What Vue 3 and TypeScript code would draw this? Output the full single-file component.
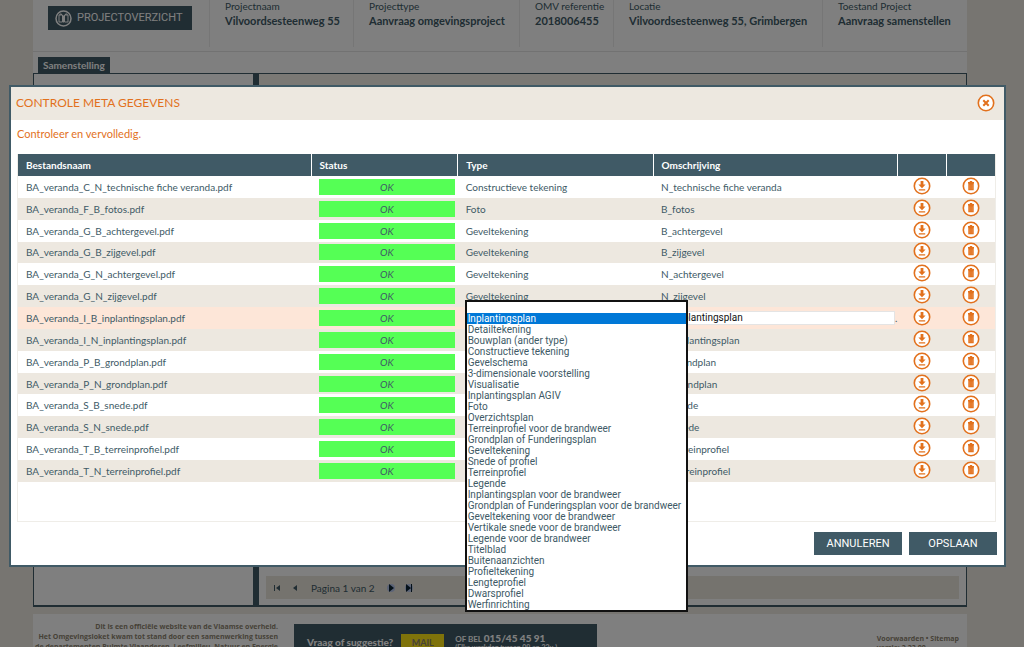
<script setup lang="ts">
import { ref } from 'vue'

interface Doc {
  file: string
  type: string
  description: string
  editing?: boolean
}

const facts = [
  { label: 'Projectnaam', value: 'Vilvoordsesteenweg 55' },
  { label: 'Projecttype', value: 'Aanvraag omgevingsproject' },
  { label: 'OMV referentie', value: '2018006455' },
  { label: 'Locatie', value: 'Vilvoordsesteenweg 55, Grimbergen' },
  { label: 'Toestand Project', value: 'Aanvraag samenstellen' },
]

const docs = ref<Doc[]>([
  { file: 'BA_veranda_C_N_technische fiche veranda.pdf', type: 'Constructieve tekening', description: 'N_technische fiche veranda' },
  { file: 'BA_veranda_F_B_fotos.pdf', type: 'Foto', description: 'B_fotos' },
  { file: 'BA_veranda_G_B_achtergevel.pdf', type: 'Geveltekening', description: 'B_achtergevel' },
  { file: 'BA_veranda_G_B_zijgevel.pdf', type: 'Geveltekening', description: 'B_zijgevel' },
  { file: 'BA_veranda_G_N_achtergevel.pdf', type: 'Geveltekening', description: 'N_achtergevel' },
  { file: 'BA_veranda_G_N_zijgevel.pdf', type: 'Geveltekening', description: 'N_zijgevel' },
  { file: 'BA_veranda_I_B_inplantingsplan.pdf', type: 'Inplantingsplan', description: 'B_inplantingsplan', editing: true },
  { file: 'BA_veranda_I_N_inplantingsplan.pdf', type: 'Inplantingsplan', description: 'N_inplantingsplan' },
  { file: 'BA_veranda_P_B_grondplan.pdf', type: 'Grondplan', description: 'B_grondplan' },
  { file: 'BA_veranda_P_N_grondplan.pdf', type: 'Grondplan', description: 'N_grondplan' },
  { file: 'BA_veranda_S_B_snede.pdf', type: 'Snede of profiel', description: 'B_snede' },
  { file: 'BA_veranda_S_N_snede.pdf', type: 'Snede of profiel', description: 'N_snede' },
  { file: 'BA_veranda_T_B_terreinprofiel.pdf', type: 'Terreinprofiel', description: 'B_terreinprofiel' },
  { file: 'BA_veranda_T_N_terreinprofiel.pdf', type: 'Terreinprofiel', description: 'N_terreinprofiel' },
])

const types = [
  '', 'Inplantingsplan', 'Detailtekening', 'Bouwplan (ander type)', 'Constructieve tekening', 'Gevelschema',
  '3-dimensionale voorstelling', 'Visualisatie', 'Inplantingsplan AGIV', 'Foto', 'Overzichtsplan',
  'Terreinprofiel voor de brandweer', 'Grondplan of Funderingsplan', 'Geveltekening', 'Snede of profiel',
  'Terreinprofiel', 'Legende', 'Inplantingsplan voor de brandweer',
  'Grondplan of Funderingsplan voor de brandweer', 'Geveltekening voor de brandweer',
  'Vertikale snede voor de brandweer', 'Legende voor de brandweer', 'Titelblad', 'Buitenaanzichten',
  'Profieltekening', 'Lengteprofiel', 'Dwarsprofiel', 'Werfinrichting',
]
</script>

<template>
  <div class="screen">
    <div class="page">
      <header class="facts">
        <div class="fact">
          <button class="overview" type="button">
            <svg width="17" height="17" viewBox="0 0 17 17" fill="none" stroke="currentColor">
              <circle cx="8.500" cy="8.500" r="7.500" stroke-width="1.500" />
              <path d="M4 5h3.500v7H4zM9.500 5H13v7H9.500zM5 5V4h1.500v1M10.500 5V4H12v1M8.500 5.500v7" />
            </svg>
            PROJECTOVERZICHT
          </button>
        </div>
        <div v-for="fact in facts" :key="fact.label" class="fact">
          <span class="label">{{ fact.label }}</span>
          <strong>{{ fact.value }}</strong>
        </div>
      </header>
      <nav class="tabs"><a href="#samenstelling">Samenstelling</a></nav>
      <main class="panels">
        <section class="tree"></section>
        <section class="files">
          <div class="toolbar"></div>
          <div class="pager">
            <button type="button" aria-label="Eerste pagina">
              <svg width="8" height="8" viewBox="0 0 8 8"><path d="M1 1h1v6H1zM7 1v6L3 4z" fill="currentColor" /></svg>
            </button>
            <button type="button" aria-label="Vorige pagina">
              <svg width="8" height="8" viewBox="0 0 8 8"><path d="M6 1v6L2 4z" fill="currentColor" /></svg>
            </button>
            <span>Pagina 1 van 2</span>
            <button class="on" type="button" aria-label="Volgende pagina">
              <svg width="8" height="8" viewBox="0 0 8 8"><path d="M2 0v8l5-4z" fill="currentColor" /></svg>
            </button>
            <button class="on" type="button" aria-label="Laatste pagina">
              <svg width="8" height="8" viewBox="0 0 8 8"><path d="M1 0v8l5-4zM6 0h1v8H6z" fill="currentColor" /></svg>
            </button>
          </div>
        </section>
      </main>
      <footer class="footer">
        <p class="about">
          Dit is een officiële website van de Vlaamse overheid.<br />
          Het Omgevingsloket kwam tot stand door een samenwerking tussen<br />
          de departementen Ruimte Vlaanderen, Leefmilieu, Natuur en Energie
        </p>
        <div class="contact">
          <strong>Vraag of suggestie?</strong>
          <a class="mail" href="#mail">MAIL</a>
          <p class="phone">OF BEL <b>015/45 45 91</b><br /><small>(Elke werkdag tussen 09 en 22u.)</small></p>
        </div>
        <p class="links"><a href="#voorwaarden">Voorwaarden</a> • <a href="#sitemap">Sitemap</a><br />versie: 2.23.00</p>
      </footer>
    </div>

    <div class="shade">
      <section class="dialog" role="dialog" aria-labelledby="dialog-title">
        <header class="dialog-head">
          <h1 id="dialog-title">CONTROLE META GEGEVENS</h1>
          <button class="icon" type="button" aria-label="Sluiten">
            <svg width="18" height="18" viewBox="0 0 18 18" fill="none" stroke="currentColor">
              <circle cx="9" cy="9" r="7.700" fill="#fff" stroke-width="1.600" />
              <path d="M6.300 6.300l5.400 5.400M11.700 6.300l-5.400 5.400" stroke-width="2" />
            </svg>
          </button>
        </header>
        <p class="hint">Controleer en vervolledig.</p>
        <div class="table-box">
          <table>
            <thead>
              <tr>
                <th class="w-file">Bestandsnaam</th>
                <th class="w-status">Status</th>
                <th class="w-type">Type</th>
                <th class="w-desc">Omschrijving</th>
                <th class="w-icon"></th>
                <th class="w-icon"></th>
              </tr>
            </thead>
            <tbody>
              <tr v-for="doc in docs" :key="doc.file" :class="{ editing: doc.editing }">
                <td>{{ doc.file }}</td>
                <td class="status"><span>OK</span></td>
                <td v-if="doc.editing" class="type-cell">
                  <select v-model="doc.type" :size="types.length" aria-label="Type">
                    <option v-for="type in types" :key="type" :value="type">{{ type }}</option>
                  </select>
                </td>
                <td v-else>{{ doc.type }}</td>
                <td v-if="doc.editing">
                  <div class="edit"><input v-model="doc.description" type="text" aria-label="Omschrijving" />.</div>
                </td>
                <td v-else>{{ doc.description }}</td>
                <td class="action">
                  <button class="icon" type="button" aria-label="Downloaden">
                    <svg width="18" height="18" viewBox="0 0 18 18">
                      <circle cx="9" cy="9" r="7.700" fill="#fff" stroke="currentColor" stroke-width="1.600" />
                      <path d="M7.600 4h2.800v3.500h2.200L9 11.300 5.400 7.500h2.200zM5.800 12.200h6.400v1.200H5.800z" fill="currentColor" />
                    </svg>
                  </button>
                </td>
                <td class="action">
                  <button class="icon" type="button" aria-label="Verwijderen">
                    <svg width="18" height="18" viewBox="0 0 18 18">
                      <circle cx="9" cy="9" r="7.700" fill="#fff" stroke="currentColor" stroke-width="1.600" />
                      <path d="M7.800 4h2.400v1H12v1.400H6V5h1.800zM6.300 6.400h5.400v6.900H6.300z" fill="currentColor" />
                      <path d="M7.900 7.500v4.800M10.100 7.500v4.800" stroke="#f3b58b" stroke-width=".4" />
                    </svg>
                  </button>
                </td>
              </tr>
            </tbody>
          </table>
        </div>
        <div class="buttons">
          <button type="button">ANNULEREN</button>
          <button type="button">OPSLAAN</button>
        </div>
      </section>
    </div>
  </div>
</template>

<style>
body {
  background: #efebe3;
}
</style>

<style scoped>
.screen {
  position: relative;
  height: 100vh;
  overflow: hidden;
  background: #efebe3;
  color: #405a66;
  font-family: Lato, "Liberation Sans", sans-serif;
  font-size: 10px;
  line-height: 14px;
}
.screen * {
  box-sizing: border-box;
}
button {
  border: 0;
  padding: 0;
  font: inherit;
  color: inherit;
  background: none;
}
svg {
  display: block;
}
p,
h1 {
  margin: 0;
}
.page {
  margin: 0 57px 0 33px;
}
.facts {
  display: grid;
  grid-template-columns: 177px 144px 166px 94px 209px 1fr;
  height: 52px;
  padding-bottom: 4px;
  border-bottom: 1px solid #e4e4e4;
  background: #fff;
}
.fact {
  display: flex;
  flex-direction: column;
  padding: 0 0 0 15px;
  border-right: 1px solid #ececec;
  white-space: nowrap;
}
.fact:last-child {
  border-right: 0;
}
.label {
  line-height: 13px;
}
.fact strong {
  font-size: 11px;
  line-height: 16px;
}
.overview {
  display: flex;
  align-items: center;
  align-self: flex-start;
  gap: 5px;
  height: 24px;
  margin-top: 6px;
  padding: 0 9px 0 7px;
  background: #405a66;
  color: #fff;
  font-family: Roboto, "Liberation Sans", sans-serif;
  font-size: 11px;
}
.tabs {
  display: flex;
  height: 21px;
  padding: 5px 5px 0;
  background: #fff;
}
.tabs a {
  padding: 0 5px;
  background: #405a66;
  color: #fff;
  font-weight: 700;
  line-height: 16px;
  text-decoration: none;
}
.panels {
  display: flex;
  height: 534px;
  border: 1px solid #405a66;
  border-bottom-width: 2px;
  background: #fff;
}
.tree {
  width: 219px;
}
.files {
  flex: 1;
  display: flex;
  flex-direction: column;
  justify-content: space-between;
  padding: 0 7px 6px;
  border-left: 6px solid #405a66;
}
.toolbar {
  height: 20px;
  margin: 0 -7px;
  background: #f7f2ea;
}
.pager {
  display: flex;
  align-items: center;
  gap: 10px;
  height: 23px;
  padding-left: 7px;
  background: #ebe6dc;
}
.pager span {
  margin: 0 2px;
}
.pager .on {
  border-radius: 4px;
  background: #b8c8ee;
  color: #0b2233;
}
.footer {
  display: flex;
  margin-top: 7px;
  height: 60px;
  background: #fff;
  color: #8d8470;
  font-family: "Open Sans", sans-serif;
  font-size: 7px;
  font-weight: 700;
  line-height: 10px;
}
.footer a {
  color: inherit;
  text-decoration: none;
}
.about {
  width: 245px;
  padding-top: 8px;
  text-align: right;
  white-space: nowrap;
}
.contact {
  display: flex;
  align-items: flex-start;
  gap: 8px;
  width: 303px;
  margin: 10px 0 0 16px;
  padding: 10px 0 0 13px;
  background: #405a66;
  color: #fff;
  font-family: Lato, sans-serif;
}
.contact strong {
  font-size: 10px;
  line-height: 16px;
}
.contact .mail {
  width: 43px;
  height: 20px;
  background: #ffe615;
  color: #8d8470;
  font-size: 9px;
  line-height: 18px;
  text-align: center;
}
.phone {
  margin-left: 3px;
  font-size: 8px;
  line-height: 8px;
}
.phone b {
  font-size: 10px;
}
.phone small {
  font-size: 7px;
}
.links {
  margin-left: auto;
  padding: 20px 8px 0 0;
  line-height: 9px;
}
.shade {
  position: absolute;
  inset: 0;
  padding: 85px 18px 0 9px;
  background: rgba(0, 0, 0, 0.5);
}
.dialog {
  border: 2px solid #405a66;
  background: #fff;
}
.dialog-head {
  display: flex;
  align-items: center;
  justify-content: space-between;
  height: 33px;
  padding: 0 9px 2px 5px;
  background: #ede8e0;
  color: #e2711d;
}
h1 {
  font-size: 12px;
  font-weight: 400;
  line-height: 16px;
}
.hint {
  padding: 6px 6px 0;
  color: #e2711d;
  font-size: 11px;
  line-height: 16px;
}
.table-box {
  margin: 12px 8px 0 6px;
  padding-bottom: 39px;
  border: 1px solid #efede8;
  border-top: 0;
}
table {
  width: 100%;
  height: 328px;
  border-collapse: collapse;
  table-layout: fixed;
}
th,
td {
  height: 21px;
  padding: 0 8px;
  text-align: left;
  white-space: nowrap;
}
th {
  height: 22px;
  border-right: 1px solid #fff;
  background: #405a66;
  color: #fff;
}
th:last-child {
  border-right: 0;
}
.w-file {
  width: 30%;
}
.w-status {
  width: 15%;
}
.w-type {
  width: 20%;
}
.w-desc {
  width: 25%;
}
.w-icon {
  width: 5%;
}
tbody tr:nth-child(even) {
  background: #ede8e0;
}
tbody tr.editing {
  background: #fde6d8;
}
.status {
  padding: 0 3px 0 8px;
}
.status span {
  display: block;
  background: #55ff55;
  font-style: italic;
  line-height: 16px;
  text-align: center;
}
.action {
  padding: 0 0 2px;
}
.icon {
  display: block;
  color: #e2711d;
}
.action .icon {
  margin: 0 auto;
}
.type-cell {
  position: relative;
}
select {
  position: absolute;
  z-index: 1;
  top: -7px;
  left: 7px;
  width: 223px;
  padding: 0;
  border: 2px solid #111;
  border-radius: 0;
  outline: 0;
  overflow: hidden;
  background: #fff;
  color: #405a66;
  font-family: Roboto, "Liberation Sans", sans-serif;
  font-size: 10px;
  line-height: 11px;
}
option {
  height: 11px;
  min-height: 11px;
  padding: 0 1px;
  line-height: 11px;
}
option:checked {
  background: #0078d7 linear-gradient(#0078d7, #0078d7);
  color: #fff;
}
.edit {
  display: flex;
  align-items: center;
  margin-right: -8px;
}
input {
  flex: 1;
  min-width: 0;
  height: 14px;
  padding: 0 2px;
  border: 1px solid #e4e4e4;
  color: #111;
  font-family: Roboto, "Liberation Sans", sans-serif;
  font-size: 10px;
}
.buttons {
  display: flex;
  justify-content: flex-end;
  gap: 7px;
  padding: 10px 7px 10px;
}
.buttons button {
  width: 88px;
  height: 23px;
  background: #405a66;
  color: #fff;
  font-family: Roboto, "Liberation Sans", sans-serif;
  font-size: 11px;
}
</style>
